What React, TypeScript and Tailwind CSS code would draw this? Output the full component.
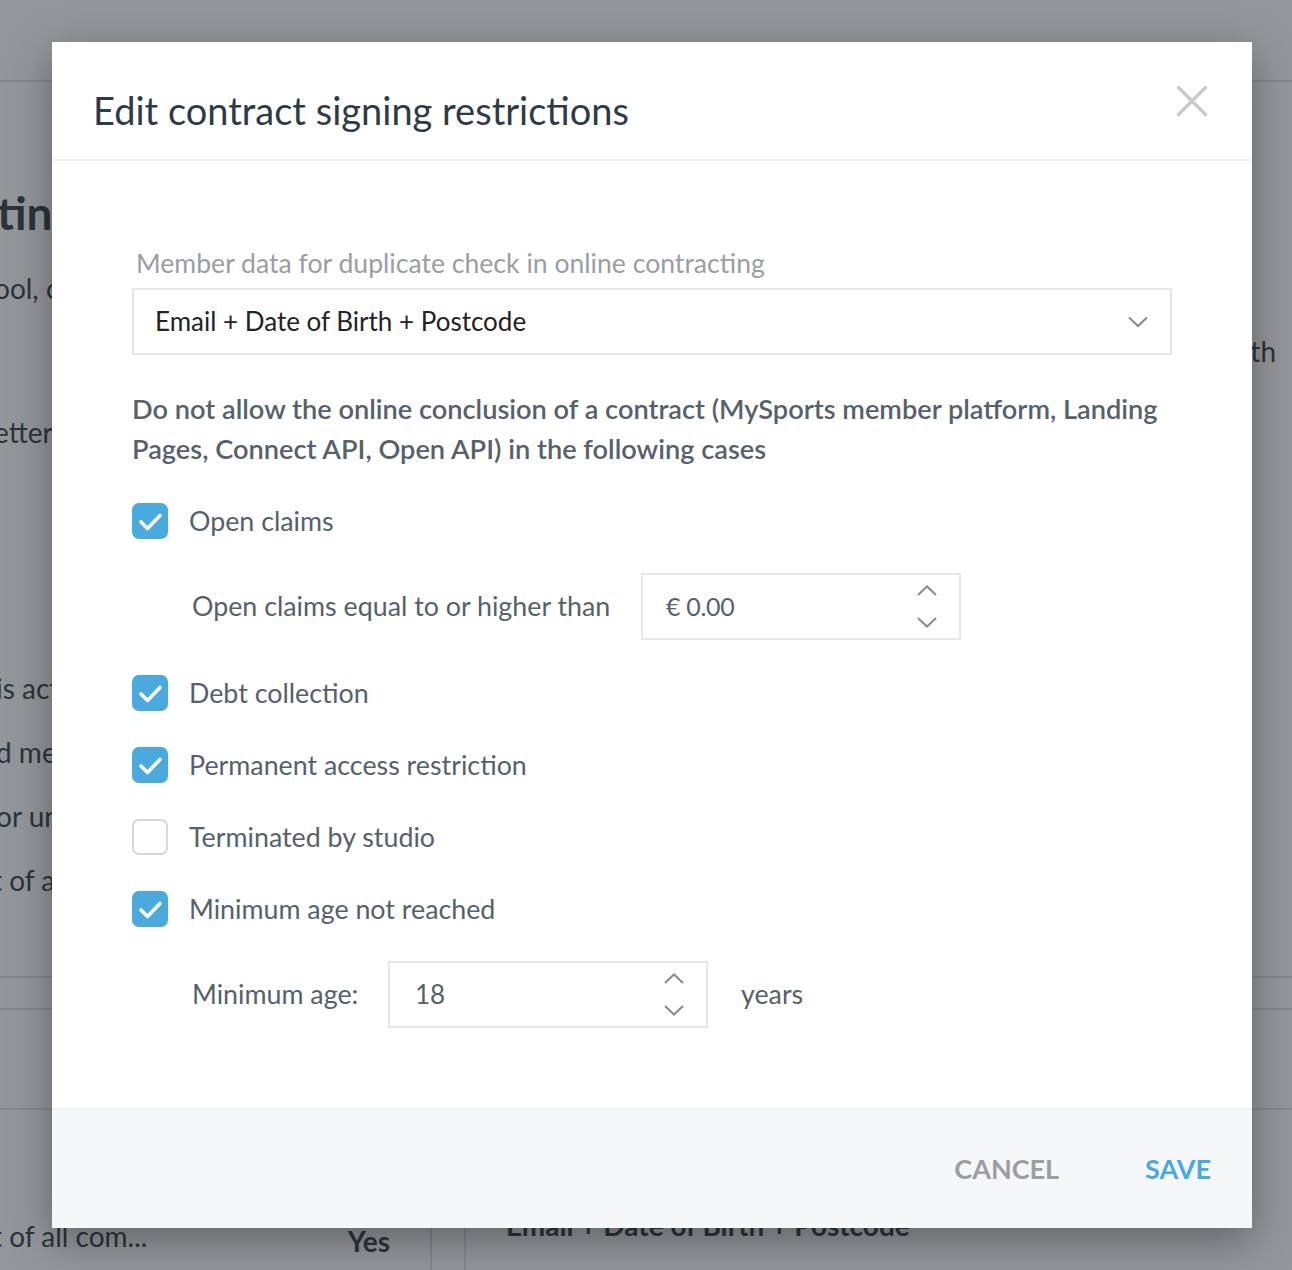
import React from 'react';

// Checkbox used in the restriction list
function Check({ checked }: { checked: boolean }) {
  if (!checked) {
    return <span className="block h-[36px] w-[36px] shrink-0 rounded-[7px] border-2 border-[#d6d7db] bg-white" />;
  }
  return (
    <span className="flex h-[36px] w-[36px] shrink-0 items-center justify-center rounded-[7px] bg-[#4aa9dd]">
      <svg width="36" height="36" viewBox="0 0 36 36" fill="none">
        <path d="M9 19l6.5 6.5L28 12.5" stroke="white" strokeWidth="3.6" strokeLinecap="round" strokeLinejoin="round" />
      </svg>
    </span>
  );
}

function Spinner() {
  return (
    <div className="flex flex-col items-center gap-[21px]">
      <svg width="20" height="11" viewBox="0 0 20 11" fill="none">
        <path d="M1 10L10 1.5L19 10" stroke="#8a8a8a" strokeWidth="2" />
      </svg>
      <svg width="20" height="11" viewBox="0 0 20 11" fill="none">
        <path d="M1 1L10 9.5L19 1" stroke="#8a8a8a" strokeWidth="2" />
      </svg>
    </div>
  );
}

function Row({ label, checked }: { label: string; checked: boolean }) {
  return (
    <div className="flex h-[36px] items-center gap-[21px]">
      <Check checked={checked} />
      <span className="text-[26.8px] leading-[36px] text-[#56616b]">{label}</span>
    </div>
  );
}

export default function App() {
  return (
    <div className="relative h-[1270px] w-full overflow-hidden bg-white font-['Lato','Open_Sans',sans-serif] text-[#2d3842]">
      {/* page behind the dialog */}
      <div className="h-[82px] border-b-2 border-[#dcdfe2]" />
      <div className="flex h-[894px]">
        <div className="w-[432px] overflow-hidden whitespace-nowrap text-[28px] leading-[36px]">
          <div className="ml-[-3px] mt-[101px] text-[46px] font-bold leading-[60px]">ting</div>
          <div className="ml-[-6px] mt-[27px]">ool, contracting</div>
          <div className="ml-[-6px] mt-[108px]">etter</div>
          <div className="ml-[-4px] mt-[220px]">is active</div>
          <div className="ml-[-4px] mt-[28px]">d members</div>
          <div className="ml-[-4px] mt-[28px]">or under age</div>
          <div className="ml-[-8px] mt-[28px]">t of all</div>
        </div>
        <div className="flex-1 overflow-hidden whitespace-nowrap pr-[16px] pt-[251px] text-right text-[28px] leading-[36px]">
          Email + Date of Birth
        </div>
      </div>
      <div className="h-[34px] border-y-2 border-[#dcdfe2]" />
      <div className="h-[100px] border-b-2 border-[#dcdfe2]" />
      <div className="flex h-[160px]">
        <div className="flex w-[432px] items-start justify-between border-r-2 border-[#dcdfe2] pr-[40px] pt-[108px] text-[28px] leading-[36px]">
          <span className="ml-[-8px]">t of all com...</span>
          <span className="mt-[5px] font-bold">Yes</span>
        </div>
        <div className="w-[34px] border-r-2 border-[#dcdfe2]" />
        <div className="pl-[40px] pt-[97px] text-[28px] font-bold leading-[36px]">Email + Date of Birth + Postcode</div>
      </div>

      {/* overlay */}
      <div className="absolute inset-0 bg-[#2a2f36]/50" />

      {/* dialog */}
      <div className="absolute left-[52px] top-[42px] flex h-[1186px] w-[1200px] flex-col bg-white shadow-[0_12px_40px_rgba(0,0,0,0.35)]">
        <div className="flex h-[119px] shrink-0 items-center justify-between border-b-2 border-[#eff0f2] pl-[41px] pr-[44px]">
          <h1 className="pt-[18px] text-[38px] leading-[48px] text-[#2e3b46]">Edit contract signing restrictions</h1>
          <svg width="32" height="32" viewBox="0 0 32 32" fill="none">
            <path d="M1.5 1.5L30.5 30.5M30.5 1.5L1.5 30.5" stroke="#cbcbcb" strokeWidth="3.4" />
          </svg>
        </div>

        <div className="flex flex-1 flex-col pl-[80px] pr-[80px] pt-[84px]">
          <label className="pl-[4px] text-[26.6px] leading-[36px] text-[#9a9ea3]">Member data for duplicate check in online contracting</label>
          <div className="mt-[7px] flex h-[67px] items-center justify-between border-2 border-[#e6e7e9] pl-[21px] pr-[22px]">
            <span className="text-[26px] text-[#1f2326]">Email + Date of Birth + Postcode</span>
            <svg width="20" height="12" viewBox="0 0 20 12" fill="none">
              <path d="M1 1.5L10 10L19 1.5" stroke="#8a8a8a" strokeWidth="2" />
            </svg>
          </div>

          <p className="mt-[34px] text-[27.2px] font-semibold leading-[40px] text-[#56616b]">
            Do not allow the online conclusion of a contract (MySports member platform, Landing Pages, Connect API, Open API) in the following cases
          </p>

          <div className="mt-[34px]">
            <Row label="Open claims" checked />
          </div>
          <div className="mt-[34px] flex items-center pl-[60px]">
            <span className="w-[449px] text-[26.8px] text-[#56616b]">Open claims equal to or higher than</span>
            <div className="flex h-[67px] w-[320px] items-center justify-between border-2 border-[#e6e7e9] pl-[23px] pr-[22px]">
              <span className="text-[25px] tracking-[-0.3px] text-[#56616b]">€ 0.00</span>
              <Spinner />
            </div>
          </div>
          <div className="mt-[35px] flex flex-col gap-[36px]">
            <Row label="Debt collection" checked />
            <Row label="Permanent access restriction" checked />
            <Row label="Terminated by studio" checked={false} />
            <Row label="Minimum age not reached" checked />
          </div>
          <div className="mt-[34px] flex items-center pl-[60px]">
            <span className="w-[196px] text-[26.8px] text-[#56616b]">Minimum age:</span>
            <div className="flex h-[67px] w-[320px] items-center justify-between border-2 border-[#e6e7e9] pl-[25px] pr-[22px]">
              <span className="text-[26px] text-[#56616b]">18</span>
              <Spinner />
            </div>
            <span className="ml-[33px] text-[26.8px] text-[#56616b]">years</span>
          </div>
        </div>

        <div className="flex h-[120px] shrink-0 items-center justify-end gap-[86px] border-t-2 border-[#f0f1f3] bg-[#f6f7f9] pr-[41px]">
          <button className="text-[27px] font-bold text-[#9b9ea2]">CANCEL</button>
          <button className="text-[27px] font-bold text-[#4aa9dd]">SAVE</button>
        </div>
      </div>
    </div>
  );
}
